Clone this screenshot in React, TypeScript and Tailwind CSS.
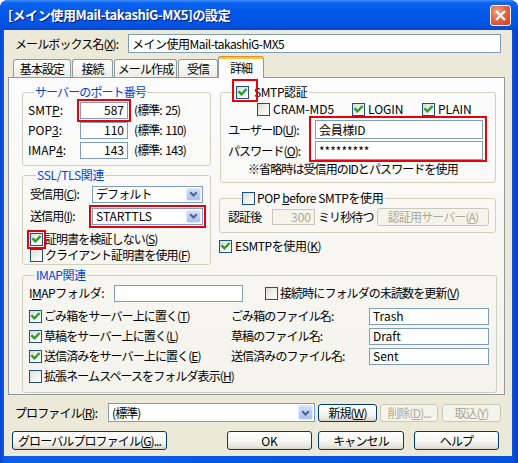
import React from "react";

function Check({ checked }: { checked?: boolean }) {
  return (
    <span className="flex h-[13px] w-[13px] shrink-0 items-center justify-center border border-[#1c5180] bg-[linear-gradient(135deg,#dcdcd6_0%,#f0f0ec_50%,#ffffff_100%)]">
      {checked ? (
        <svg width="11" height="11" viewBox="0 0 11 11">
          <path d="M2.2 5 L4.4 7.4 L8.8 2.8" fill="none" stroke="#21a121" strokeWidth="2.3" strokeLinecap="square" />
        </svg>
      ) : null}
    </span>
  );
}

function Field({ className, children }: { className: string; children?: React.ReactNode }) {
  return (
    <div className={`flex items-center overflow-hidden whitespace-nowrap border border-[#7f9db9] bg-white px-[3px] ${className}`}>
      {children}
    </div>
  );
}

function Combo({ className, children }: { className: string; children?: React.ReactNode }) {
  return (
    <div className={`flex items-stretch border border-[#7f9db9] bg-white ${className}`}>
      <span className="flex flex-1 items-center overflow-hidden whitespace-nowrap pl-[3px]">{children}</span>
      <span className="my-[1px] mr-[1px] flex w-[15px] items-center justify-center rounded-[2px] border border-[#e3ebfd] bg-[linear-gradient(180deg,#d2defd_0%,#bccffa_50%,#aac0f2_100%)]">
        <svg width="9" height="6" viewBox="0 0 9 6">
          <path d="M1.2 1.2 L4.5 4.5 L7.8 1.2" fill="none" stroke="#4d6185" strokeWidth="2" />
        </svg>
      </span>
    </div>
  );
}

function Btn({ className, children, disabled }: { className: string; children?: React.ReactNode; disabled?: boolean }) {
  return (
    <div
      className={`flex items-center justify-center whitespace-nowrap rounded-[3px] border ${
        disabled
          ? "border-[#c9c7ba] bg-[#f5f4ea] text-[#aca899]"
          : "border-[#003c74] bg-[linear-gradient(180deg,#ffffff_0%,#f5f5f1_55%,#e6e3da_88%,#d6d0c5_100%)]"
      } ${className}`}
    >
      {children}
    </div>
  );
}

function CheckLabel({ checked, children, className }: { checked?: boolean; children: React.ReactNode; className?: string }) {
  return (
    <span className={`flex items-center gap-[2px] whitespace-nowrap ${className ?? ""}`}>
      <Check checked={checked} />
      <span>{children}</span>
    </span>
  );
}

function Tab({ className, children }: { className: string; children: React.ReactNode }) {
  return (
    <div
      className={`flex h-[19px] items-start justify-center rounded-t-[3px] border border-b-0 border-[#919b9c] bg-[linear-gradient(180deg,#ffffff_0%,#f4f3ee_60%,#ecebe6_100%)] pt-[2px] ${className}`}
    >
      {children}
    </div>
  );
}

export default function App() {
  return (
    <div className="flex h-[463px] w-[518px] flex-col overflow-hidden rounded-t-[8px] bg-[linear-gradient(90deg,#0a45d0_0%,#0d5ce8_1%,#0556e4_50%,#0451dc_99%,#0a3ac0_100%)] font-['Noto_Sans_CJK_JP',sans-serif] text-[12px] leading-[14px] tracking-[-0.9px] text-black">
      {/* Title bar */}
      <div className="flex h-[30px] shrink-0 items-center justify-between bg-[linear-gradient(180deg,#3d8ffa_0%,#0a62ee_10%,#0258e8_40%,#0254e4_80%,#0348d2_100%)] pl-[8px] pr-[7px]">
        <span className="text-[13px] font-bold tracking-[-0.4px] text-white [text-shadow:1px_1px_#0a1c7a]">
          [メイン使用Mail-takashiG-MX5]の設定
        </span>
        <div className="flex h-[21px] w-[21px] items-center justify-center rounded-[3px] border border-white bg-[radial-gradient(circle_at_35%_30%,#f4a88c_0%,#e46a4c_40%,#cf3d1e_100%)]">
          <svg width="11" height="11" viewBox="0 0 11 11">
            <path d="M1.8 1.8 L9.2 9.2 M9.2 1.8 L1.8 9.2" stroke="white" strokeWidth="2.2" strokeLinecap="square" />
          </svg>
        </div>
      </div>

      {/* Body */}
      <div className="ml-[4px] flex h-[426px] w-[508px] flex-col bg-[#ece9d8]">
        {/* Mailbox name */}
        <div className="mt-[4px] flex h-[19px] items-center pl-[11px]">
          <span className="w-[113px] whitespace-nowrap">
            メールボックス名(<u>X</u>):
          </span>
          <Field className="h-[19px] w-[373px] tracking-[-0.5px]">メイン使用Mail-takashiG-MX5</Field>
        </div>

        {/* Tabs */}
        <div className="mt-[4px] flex h-[21px] items-end pl-[9px]">
          <Tab className="mr-[1px] w-[58px]">基本設定</Tab>
          <Tab className="mr-[1px] w-[41px]">接続</Tab>
          <Tab className="mr-[1px] w-[63px]">メール作成</Tab>
          <Tab className="w-[40px]">受信</Tab>
          <div className="relative z-10 flex h-[22px] w-[46px] items-start justify-center rounded-t-[3px] border border-b-0 border-[#919b9c] border-t-[#e68b2c] bg-[linear-gradient(180deg,#ffc73c_0px,#ffc73c_2px,#fcfcfe_2px)] pt-[4px]">
            詳細
          </div>
        </div>

        {/* Panel */}
        <div className="-mt-px ml-[4px] flex h-[318px] w-[497px] flex-col border border-[#919b9c] bg-[linear-gradient(180deg,#fcfcfe_0%,#f7f6f1_60%,#f4f3ee_100%)] pl-[13px]">
          <div className="flex h-[187px] gap-[8px]">
            {/* Left column */}
            <div className="flex w-[189px] flex-col">
              <fieldset className="mt-[7px] rounded-[3px] border border-[#d0d0bf] pb-[5px] pl-[5px] pt-[1px]">
                <legend className="ml-[6px] px-[1px] text-[#0046d5]">サーバーのポート番号</legend>
                <div className="flex h-[20px] items-center">
                  <span className="w-[52px] tracking-[0px]">
                    SMT<u>P</u>:
                  </span>
                  <Field className="h-[17px] w-[48px] justify-end tracking-[0px] outline-2 outline-offset-[1px] outline-[#e8000b]">587</Field>
                  <span className="ml-[6px] whitespace-nowrap">(標準:&nbsp; 25)</span>
                </div>
                <div className="flex h-[20px] items-center">
                  <span className="w-[52px] tracking-[0px]">
                    POP<u>3</u>:
                  </span>
                  <Field className="h-[17px] w-[48px] justify-end tracking-[0px]">110</Field>
                  <span className="ml-[6px] whitespace-nowrap">(標準:&nbsp; 110)</span>
                </div>
                <div className="flex h-[20px] items-center">
                  <span className="w-[52px] tracking-[0px]">
                    IMAP<u>4</u>:
                  </span>
                  <Field className="h-[17px] w-[48px] justify-end tracking-[0px]">143</Field>
                  <span className="ml-[6px] whitespace-nowrap">(標準:&nbsp; 143)</span>
                </div>
              </fieldset>

              <fieldset className="mt-[2px] rounded-[3px] border border-[#d0d0bf] pb-[1px] pl-[7px] pt-[1px]">
                <legend className="ml-[6px] px-[1px] text-[#0046d5] tracking-[-0.3px]">SSL/TLS関連</legend>
                <div className="flex h-[22px] items-center">
                  <span className="w-[62px] whitespace-nowrap">
                    受信用(<u>C</u>):
                  </span>
                  <Combo className="h-[17px] w-[111px]">デフォルト</Combo>
                </div>
                <div className="flex h-[22px] items-center">
                  <span className="w-[62px] whitespace-nowrap">
                    送信用(<u>I</u>):
                  </span>
                  <Combo className="h-[17px] w-[111px] tracking-[0px] outline-2 outline-offset-[1px] outline-[#e8000b]">STARTTLS</Combo>
                </div>
                <div className="mt-[4px] flex h-[16px] items-center">
                  <span className="flex items-center gap-[2px] whitespace-nowrap">
                    <span className="flex outline-2 outline-offset-[1px] outline-[#e8000b]">
                      <Check checked />
                    </span>
                    <span>
                      証明書を検証しない(<u>S</u>)
                    </span>
                  </span>
                </div>
                <div className="flex h-[16px] items-center">
                  <CheckLabel>
                    クライアント証明書を使用(<u>F</u>)
                  </CheckLabel>
                </div>
              </fieldset>
            </div>

            {/* Right column */}
            <div className="flex w-[277px] flex-col">
              <fieldset className="ml-[1px] mt-[7px] rounded-[3px] border border-[#d0d0bf] pb-[5px] pl-[7px] pt-[1px]">
                <legend className="ml-[8px] pr-[2px]">
                  <span className="flex items-center gap-[5px]">
                    <span className="relative flex">
                      <Check checked />
                      <span className="absolute left-[-4px] top-[-7px] h-[23px] w-[26px] border-2 border-[#e8000b]" />
                    </span>
                    <span className="tracking-[-0.4px]">SMTP認証</span>
                  </span>
                </legend>
                <div className="flex h-[18px] items-center pl-[29px] tracking-[0px]">
                  <CheckLabel className="w-[95px] gap-[3px]">CRAM-MD5</CheckLabel>
                  <CheckLabel checked className="w-[70px] gap-[3px]">
                    LOGIN
                  </CheckLabel>
                  <CheckLabel checked className="gap-[3px]">
                    PLAIN
                  </CheckLabel>
                </div>
                <div className="relative mt-[1px] grid grid-cols-[87px_168px]">
                  <span className="flex h-[21px] items-center whitespace-nowrap">
                    ユーザーID(<u>U</u>):
                  </span>
                  <div className="flex h-[21px] items-center">
                    <Field className="h-[19px] w-[168px] tracking-[-0.3px]">会員様ID</Field>
                  </div>
                  <span className="flex h-[21px] items-center whitespace-nowrap">
                    パスワード(<u>O</u>):
                  </span>
                  <div className="flex h-[21px] items-center">
                    <Field className="h-[19px] w-[168px] tracking-[0px]">*********</Field>
                  </div>
                  <span className="absolute left-[81px] top-[-3px] h-[46px] w-[178px] border-2 border-[#e8000b]" />
                </div>
                <div className="flex h-[16px] items-center whitespace-nowrap pl-[20px]">
                  ※省略時は受信用のIDとパスワードを使用
                </div>
              </fieldset>

              <fieldset className="mt-[8px] rounded-[3px] border border-[#d0d0bf] pb-[4px] pl-[8px] pt-[1px]">
                <legend className="ml-[14px] pr-[2px]">
                  <CheckLabel className="gap-[2px] tracking-[-0.4px]">
                    POP <u>b</u>efore SMTPを使用
                  </CheckLabel>
                </legend>
                <div className="flex h-[22px] items-center">
                  <span className="w-[44px]">認証後</span>
                  <div className="flex h-[16px] w-[43px] items-center justify-end border border-[#c9c7ba] bg-[#f5f4ea] px-[3px] tracking-[0px] text-[#aca899]">
                    300
                  </div>
                  <span className="w-[62px] whitespace-nowrap pl-[3px]">ミリ秒待つ</span>
                  <Btn disabled className="h-[18px] w-[112px]">
                    認証用サーバー(<u>A</u>)
                  </Btn>
                </div>
              </fieldset>

              <div className="mt-[6px] flex h-[14px] items-center">
                <CheckLabel checked className="gap-[3px] tracking-[-0.4px]">
                  ESMTPを使用(<u>K</u>)
                </CheckLabel>
              </div>
            </div>
          </div>

          {/* IMAP */}
          <fieldset className="mt-[3px] w-[475px] rounded-[3px] border border-[#d0d0bf] pb-[6px] pl-[6px] pt-[1px]">
            <legend className="ml-[6px] px-[1px] text-[#0046d5] tracking-[-0.4px]">IMAP関連</legend>
            <div className="flex h-[20px] items-center">
              <span className="w-[85px] whitespace-nowrap tracking-[-0.5px]">
                I<u>M</u>APフォルダ:
              </span>
              <Field className="h-[17px] w-[129px]" />
              <CheckLabel className="ml-[22px] gap-[2px]">
                接続時にフォルダの未読数を更新(<u>V</u>)
              </CheckLabel>
            </div>
            <div className="mt-[3px] flex h-[20px] items-center">
              <CheckLabel checked className="w-[202px]">
                ごみ箱をサーバー上に置く(<u>T</u>)
              </CheckLabel>
              <span className="w-[138px] whitespace-nowrap">ごみ箱のファイル名:</span>
              <Field className="h-[17px] w-[120px] tracking-[0px]">Trash</Field>
            </div>
            <div className="flex h-[20px] items-center">
              <CheckLabel checked className="w-[202px]">
                草稿をサーバー上に置く(<u>L</u>)
              </CheckLabel>
              <span className="w-[138px] whitespace-nowrap">草稿のファイル名:</span>
              <Field className="h-[17px] w-[120px] tracking-[0px]">Draft</Field>
            </div>
            <div className="flex h-[20px] items-center">
              <CheckLabel checked className="w-[202px]">
                送信済みをサーバー上に置く(<u>E</u>)
              </CheckLabel>
              <span className="w-[138px] whitespace-nowrap">送信済みのファイル名:</span>
              <Field className="h-[17px] w-[120px] tracking-[0px]">Sent</Field>
            </div>
            <div className="flex h-[20px] items-center">
              <CheckLabel>
                拡張ネームスペースをフォルダ表示(<u>H</u>)
              </CheckLabel>
            </div>
          </fieldset>
        </div>

        {/* Profile row */}
        <div className="mt-[8px] flex h-[19px] items-center pl-[11px]">
          <span className="w-[93px] whitespace-nowrap">
            プロファイル(<u>R</u>):
          </span>
          <Combo className="h-[19px] w-[207px]">(標準)</Combo>
          <Btn className="ml-[3px] h-[18px] w-[59px]">
            新規(<u>W</u>)
          </Btn>
          <Btn disabled className="ml-[3px] h-[18px] w-[58px]">
            削除(<u>D</u>)...
          </Btn>
          <Btn disabled className="ml-[4px] h-[18px] w-[59px]">
            取込(<u>Y</u>)
          </Btn>
        </div>

        {/* Buttons row */}
        <div className="mt-[9px] flex h-[19px] items-center pl-[8px]">
          <Btn className="h-[19px] w-[155px]">
            グローバルプロファイル(<u>G</u>)...
          </Btn>
          <Btn className="ml-[60px] h-[19px] w-[85px] tracking-[0px]">OK</Btn>
          <Btn className="ml-[6px] h-[19px] w-[86px]">キャンセル</Btn>
          <Btn className="ml-[10px] h-[19px] w-[85px]">ヘルプ</Btn>
        </div>
      </div>
    </div>
  );
}
